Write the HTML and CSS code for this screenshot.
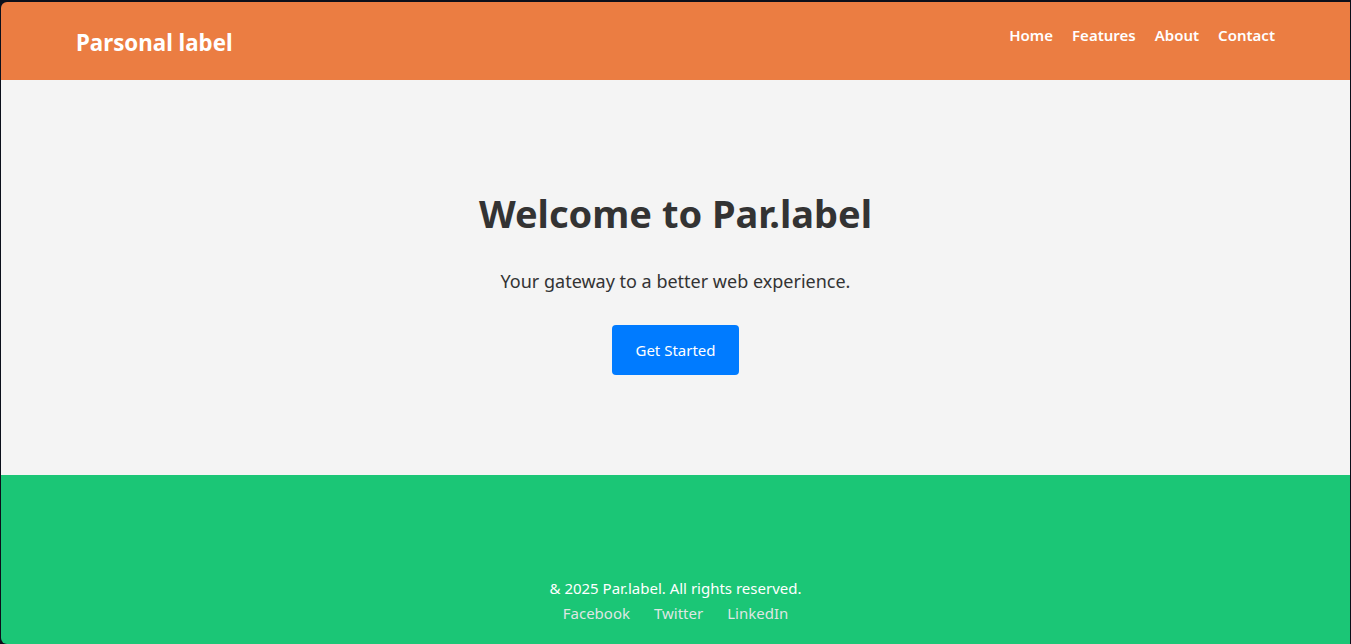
FILE: index.html
```html
<!DOCTYPE html>
<html lang="en">
<head>
<meta charset="utf-8">
<title>Par.label</title>
<link rel="stylesheet" href="styles.css">
</head>
<body>
<div class="frame">
  <header class="site-header">
    <div class="logo">Parsonal label</div>
    <nav class="nav">
      <a href="#">Home</a>
      <a href="#">Features</a>
      <a href="#">About</a>
      <a href="#">Contact</a>
    </nav>
  </header>
  <main class="hero">
    <h1>Welcome to Par.label</h1>
    <p>Your gateway to a better web experience.</p>
    <a class="btn" href="#">Get Started</a>
  </main>
  <footer class="site-footer">
    <p class="copy">&amp; 2025 Par.label. All rights reserved.</p>
    <div class="social">
      <a href="#">Facebook</a>
      <a href="#">Twitter</a>
      <a href="#">LinkedIn</a>
    </div>
  </footer>
</div>
</body>
</html>
```

FILE: styles.css
```css
html, body {
  margin: 0;
  padding: 0;
  height: 100%;
}
body {
  background: #0b0f1a;
  font-family: "Noto Sans", "Open Sans", sans-serif;
  overflow: hidden;
}
.frame {
  margin: 2px 1px 0 1px;
  height: 642px;
  display: flex;
  flex-direction: column;
  border-radius: 6px 0 0 6px;
  overflow: hidden;
}
.site-header {
  background: #eb7d42;
  height: 78px;
  box-sizing: border-box;
  display: flex;
  justify-content: space-between;
  align-items: flex-start;
  padding: 0 75px;
}
.logo {
  color: #fff;
  font-weight: 700;
  font-size: 22.3px;
  margin-top: 25px;
}
.nav {
  display: flex;
  gap: 19px;
  margin-top: 23px;
}
.nav a {
  color: #fff;
  text-decoration: none;
  font-weight: 600;
  font-size: 15px;
}
.hero {
  background: #f4f4f4;
  height: 395px;
  box-sizing: border-box;
  display: flex;
  flex-direction: column;
  align-items: center;
  justify-content: center;
  color: #333;
  text-align: center;
  padding-top: 6px;
}
.hero h1 {
  font-size: 38px;
  font-weight: 700;
  margin: 0 0 30px;
}
.hero p {
  font-size: 18px;
  margin: 0 0 32px;
}
.btn {
  display: inline-block;
  background: #007bff;
  color: #fff;
  text-decoration: none;
  font-size: 15px;
  padding: 0 23px;
  height: 50px;
  line-height: 50px;
  border-radius: 4px;
}
.site-footer {
  background: #1bc676;
  flex: 1;
  display: flex;
  flex-direction: column;
  align-items: center;
  justify-content: flex-end;
  color: #fff;
  padding-bottom: 21px;
  font-size: 15px;
}
.copy {
  margin: 0 0 5px;
}
.social {
  display: flex;
  gap: 24px;
}
.social a {
  color: #dfe6e3;
  text-decoration: none;
}
```
